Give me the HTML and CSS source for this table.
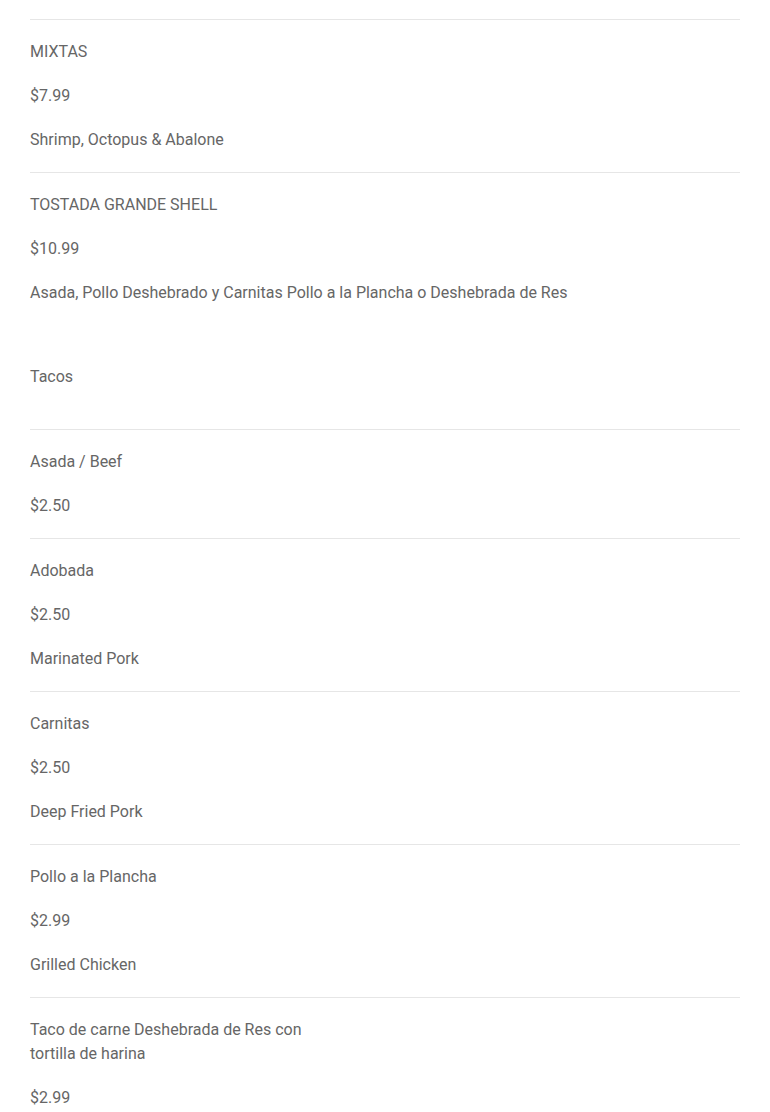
FILE: index.html
```html
<!DOCTYPE html>
<html>
<head>
<meta charset="utf-8">
<link rel="stylesheet" href="styles.css">
</head>
<body>
<div class="menu">
  <div class="item">
    <p class="name">MIXTAS</p>
    <p class="price">$7.99</p>
    <p class="desc">Shrimp, Octopus &amp; Abalone</p>
  </div>
  <div class="item last">
    <p class="name">TOSTADA GRANDE SHELL</p>
    <p class="price">$10.99</p>
    <p class="desc">Asada, Pollo Deshebrado y Carnitas Pollo a la Plancha o Deshebrada de Res</p>
  </div>
  <div class="section">
    <p class="section-title">Tacos</p>
  </div>
  <div class="item">
    <p class="name">Asada / Beef</p>
    <p class="price">$2.50</p>
  </div>
  <div class="item">
    <p class="name">Adobada</p>
    <p class="price">$2.50</p>
    <p class="desc">Marinated Pork</p>
  </div>
  <div class="item">
    <p class="name">Carnitas</p>
    <p class="price">$2.50</p>
    <p class="desc">Deep Fried Pork</p>
  </div>
  <div class="item">
    <p class="name">Pollo a la Plancha</p>
    <p class="price">$2.99</p>
    <p class="desc">Grilled Chicken</p>
  </div>
  <div class="item">
    <p class="name">Taco de carne Deshebrada de Res con tortilla de harina</p>
    <p class="price">$2.99</p>
  </div>
</div>
</body>
</html>
```
FILE: styles.css
```css
html, body {
  margin: 0;
  padding: 0;
  background: #ffffff;
}
body {
  font-family: Roboto, "Liberation Sans", sans-serif;
  font-size: 16px;
  line-height: 24px;
  color: #666666;
}
.menu {
  margin: 0 30px;
  padding-top: 19px;
}
.item {
  border-top: 1px solid #e6e6e6;
  padding: 20px 0;
  display: flex;
  flex-direction: column;
  gap: 20px;
}
.item p,
.section p {
  margin: 0;
}
.name {
  max-width: 320px;
}
.section {
  padding: 40px 0;
}
```
